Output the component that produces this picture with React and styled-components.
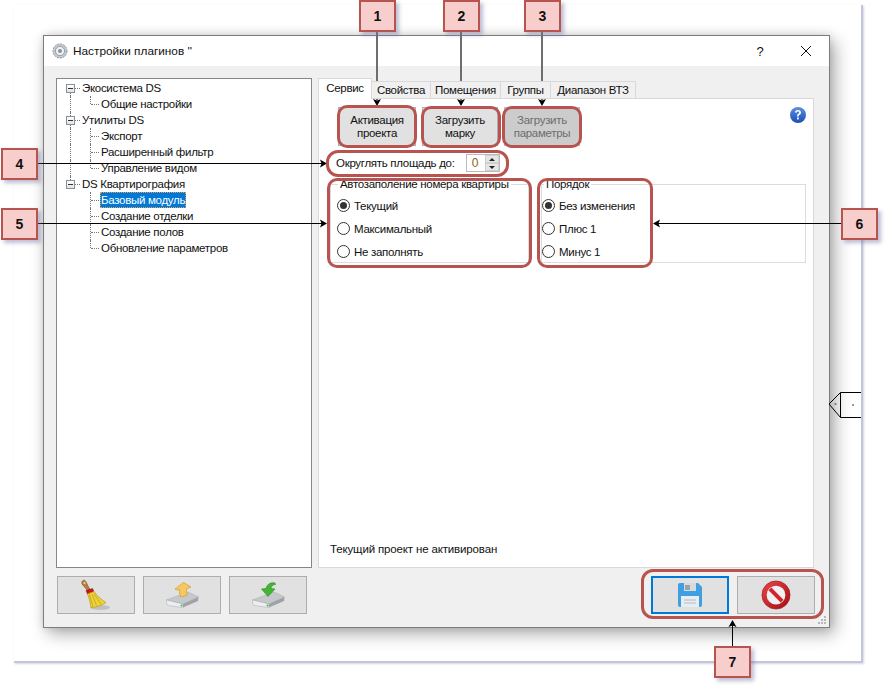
import React from 'react';
import styled, { createGlobalStyle } from 'styled-components';

const Global = createGlobalStyle`
  html, body { margin: 0; padding: 0; background: #fff; }
  body { font-family: "Liberation Sans", Roboto, sans-serif; font-size: 11.5px; letter-spacing: -0.3px; color: #111; }
`;
const Page = styled.div`position: relative; width: 889px; height: 690px; overflow: hidden; background: #fff;`;
const Sheet = styled.div`
  box-sizing: border-box; width: 849px; height: 658px; margin-left: 14px; margin-top: 5px;
  padding: 30px 0 0 29px; border-right: 2px solid #c3c5da; border-bottom: 2px solid #c3c5da;
  box-shadow: 1px 1px 2px rgba(180,182,210,.6);
`;
const Dialog = styled.div`
  box-sizing: border-box; width: 787px; height: 593px; background: #f0f0f0;
  border: 1px solid #7c7c7c; box-shadow: 5px 6px 16px rgba(0,0,0,.32), 0 0 8px rgba(0,0,0,.12);
  position: relative;
`;
const TitleBar = styled.div`
  height: 30px; background: #fff; display: flex; align-items: center; padding: 0 0 0 8px;
`;
const TitleText = styled.span`flex: 1; margin-left: 5px; font-size: 11.8px; letter-spacing: 0;`;
const TitleBtn = styled.span`width: 46px; display: flex; justify-content: center; align-items: center; font-size: 13px;`;
const Body = styled.div`
  display: grid; grid-template-columns: 256px 496px; column-gap: 6px; grid-template-rows: 490px 38px; row-gap: 8px;
  padding: 12px 0 0 12px;
`;
const Tree = styled.div`box-sizing: border-box; background: #fff; border: 1px solid #828790; padding-top: 1px;`;
const Row = styled.div`
  position: relative; height: 16px; line-height: 16px; padding-left: ${p => p.$child ? 43 : 24}px; white-space: nowrap;
  &::before {
    content: ""; display: ${p => p.$trunk ? 'block' : 'none'}; position: absolute; left: 13px; top: ${p => p.$first ? 8 : 0}px;
    height: ${p => p.$last ? 8 : 16}px; border-left: 1px dotted #777;
  }
`;
const Branch = styled.i`
  position: absolute; left: 33px; top: 0; width: 9px; height: ${p => p.$end ? 8 : 16}px; box-sizing: border-box; border-left: 1px dotted #777;
  &::after { content: ""; position: absolute; left: 0; top: 8px; width: 8px; border-top: 1px dotted #777; }
`;
const Expander = styled.i`
  position: absolute; left: 9px; top: 4px; width: 9px; height: 9px; box-sizing: border-box; border: 1px solid #8a8f98;
  background: linear-gradient(#fff, #dfe3ea); z-index: 1;
  &::after { content: ""; position: absolute; left: 1px; top: 3px; width: 5px; height: 1px; background: #333; }
  &::before { content: ""; position: absolute; left: 8px; top: 3px; width: 5px; border-top: 1px dotted #777; }
`;
const RowLabel = styled.span`
  display: inline-block; padding: 0 1px; height: 16px; box-sizing: border-box;
  ${p => p.$selected && 'background:#0078d7;color:#fff;outline:1px dotted #f0a040;outline-offset:-1px;'}
`;
const Right = styled.div`display: flex; flex-direction: column; min-height: 0;`;
const TabStrip = styled.div`display: flex; height: 21px; align-items: flex-end; position: relative; z-index: 1; margin-bottom: -1px;`;
const Tab = styled.div`
  box-sizing: border-box; width: ${p => p.$w}px; height: ${p => p.$active ? 21 : 18}px; line-height: ${p => p.$active ? 18 : 17}px;
  text-align: center; white-space: nowrap; border: 1px solid #d9d9d9; margin-left: -1px;
  border-bottom: ${p => p.$active ? 'none' : '1px solid #d9d9d9'};
  background: ${p => p.$active ? '#fff' : '#f0f0f0'};
  &:first-child { margin-left: 0; }
`;
const Panel = styled.div`
  flex: 1; box-sizing: border-box; background: #fff; border: 1px solid #d9d9d9; display: flex; flex-direction: column;
  padding: 8px 7px 10px 11px;
`;
const ActionRow = styled.div`display: flex; gap: 6px; padding-left: 8px;`;
const ActionBtn = styled.div`
  box-sizing: border-box; width: ${p => p.$w}px; height: 39px; display: flex; align-items: center; justify-content: center; text-align: center;
  line-height: 13px; background: ${p => p.$disabled ? '#cccccc' : '#e1e1e1'}; border: 1px solid ${p => p.$disabled ? '#bfbfbf' : '#adadad'};
  color: ${p => p.$disabled ? '#6d6d6d' : '#111'};
`;
const HelpIcon = styled.span`margin: -1px -1px 0 auto; display: block; width: 18px; height: 18px;`;
const SpinRow = styled.div`display: flex; align-items: center; height: 18px; margin-top: 8px; padding-left: 6px;`;
const SpinLabel = styled.span`width: 130px; white-space: nowrap;`;
const SpinBox = styled.div`
  box-sizing: border-box; width: 34px; height: 18px; border: 1px solid #bbb; display: flex; align-items: center; color: #8a6416;
`;
const SpinValue = styled.span`flex: 1; text-align: center; font-size: 12px; padding-right: 2px;`;
const SpinArrows = styled.div`display: flex; flex-direction: column; width: 14px; height: 16px;`;
const SpinArrow = styled.div`
  flex: 1; background: #e6e6e6; display: flex; align-items: center; justify-content: center; border: 1px solid #cfcfcf;
  &::after { content: ""; border-left: 3px solid transparent; border-right: 3px solid transparent;
    ${p => p.$up ? 'border-bottom: 3px solid #222;' : 'border-top: 3px solid #222;'} }
`;
const Groups = styled.div`display: flex; gap: 12px; margin-top: 5px;`;
const Group = styled.fieldset`
  box-sizing: border-box; margin: 0; height: 86px; width: ${p => p.$w}px; border: 1px solid #dcdcdc; padding: 2px 0 0 ${p => p.$pad}px; min-width: 0;
`;
const Legend = styled.legend`padding: 0 2px; margin-left: ${p => p.$off}px; line-height: 15px; white-space: nowrap;`;
const RadioRow = styled.label`display: flex; align-items: center; gap: 4px; height: 23px;`;
const Radio = styled.span`
  box-sizing: border-box; width: 13px; height: 13px; border-radius: 50%; border: 1px solid #333; display: flex; align-items: center; justify-content: center; background: #fff;
  &::after { content: ""; width: 7px; height: 7px; border-radius: 50%; background: ${p => p.$on ? '#333' : 'transparent'}; }
`;
const Status = styled.div`margin-top: auto; line-height: 16px; letter-spacing: -0.15px;`;
const Footer = styled.div`grid-column: 1 / 3; display: flex; justify-content: space-between; width: 758px; margin-left: 1px;`;
const BtnGroup = styled.div`display: flex; gap: 8px;`;
const ToolBtn = styled.div`
  box-sizing: border-box; width: 78px; height: 38px; background: #e1e1e1; display: flex; align-items: center; justify-content: center;
  border: ${p => p.$focus ? '2px solid #0078d7' : '1px solid #adadad'};
`;
const Grip = styled.svg`position: absolute; right: 2px; bottom: 2px;`;
const Highlight = styled.div`
  position: absolute; box-sizing: border-box; border: 3px solid #b85450; border-radius: ${p => p.$r}px; pointer-events: none;
  left: ${p => p.$x}px; top: ${p => p.$y}px; width: ${p => p.$w}px; height: ${p => p.$h}px;
`;
const Callout = styled.div`
  position: absolute; box-sizing: border-box; left: ${p => p.$x}px; top: ${p => p.$y}px; width: 37px; height: 32px;
  background: #f8cecc; border: 2px solid #b85450; box-shadow: 3px 3px 4px rgba(110,110,160,.45);
  display: flex; align-items: center; justify-content: center; font: bold 14px "Liberation Sans", sans-serif; letter-spacing: 0; color: #111;
`;
const Overlay = styled.svg`position: absolute; left: 0; top: 0; pointer-events: none;`;

const Gear = () => (
  <svg width="16" height="16" viewBox="0 0 16 16">
    <circle cx="8" cy="8" r="7" fill="#c4c8cf" stroke="#8d929b" strokeDasharray="2 1" />
    <circle cx="8" cy="8" r="4.6" fill="#eef0f3" stroke="#9aa0a8" />
    <circle cx="8" cy="8" r="2" fill="#8b9099" />
  </svg>
);
const Help = () => (
  <svg width="18" height="18" viewBox="0 0 18 18">
    <defs><linearGradient id="hb" x1="0" y1="0" x2="0" y2="1"><stop offset="0" stopColor="#5d90de" /><stop offset="1" stopColor="#1a4fb5" /></linearGradient></defs>
    <circle cx="9" cy="9" r="8" fill="url(#hb)" />
    <path d="M6 6.6C6 4.8 7.3 4 9 4s3 .9 3 2.5c0 1.2-.7 1.8-1.5 2.3-.6.4-.9.8-.9 1.6H8c0-1.300.4-2 1.200-2.600.6-.4 1-.7 1-1.200 0-.6-.5-1-1.200-1-.8 0-1.200.4-1.300 1.100z" fill="#fff" />
    <rect x="8" y="11.500" width="1.800" height="1.900" fill="#fff" />
  </svg>
);
const Broom = () => (
  <svg width="30" height="32" viewBox="0 0 30 32">
    <ellipse cx="19" cy="28.500" rx="10" ry="2.500" fill="#999" opacity=".45" />
    <path d="M1 5 C0 1 4 0 5 3 L9 11 L7 12z" fill="#b9813a" stroke="#7f5320" strokeWidth=".7" />
    <circle cx="3.500" cy="4" r="1" fill="#f2dcb0" />
    <path d="M5 11.500 L11.500 9.500 L13 12.500 L6.500 15z" fill="#c8141c" stroke="#8d0d12" strokeWidth=".5" />
    <path d="M6.500 15 L13 12.500 C16 17 21 21 25 23.500 C21 26.500 15 28.500 10 28.500 C9.500 24 8 19 6.500 15z" fill="#eed23a" stroke="#b79d16" strokeWidth=".7" />
    <path d="M8.500 15.500 L12 27.500 M11 15 L15.500 26.500 M13 14.500 L20 25" stroke="#b79d16" strokeWidth=".7" fill="none" />
  </svg>
);
const Drive = ({ children }) => (
  <svg width="33" height="26" viewBox="0 0 33 26">
    <path d="M.5 18 L22 10 L32.500 15 L17 22z" fill="#c5c8cc" stroke="#a4a8ad" strokeWidth=".5" />
    <path d="M.5 18 L17 22 L17 25.500 L2 23.500 C.5 23 .2 20 .5 18z" fill="#eceef0" stroke="#a4a8ad" strokeWidth=".5" />
    <path d="M17 22 L32.500 15 L32 19 L17 25.500z" fill="#9fa3a8" />
    <circle cx="15.500" cy="23.500" r="1" fill="#37c24a" />
    {children}
  </svg>
);
const Floppy = () => (
  <svg width="24" height="24" viewBox="0 0 24 24">
    <path d="M2 0 H20 L24 4 V22 a2 2 0 0 1-2 2 H2 a2 2 0 0 1-2-2 V2 a2 2 0 0 1 2-2z" fill="#3f9fe0" />
    <rect x="6" y="0" width="12" height="8" fill="#d5dbde" />
    <rect x="7" y="2" width="5" height="5" fill="#9aa3a8" />
    <rect x="3" y="13" width="18" height="11" fill="#e7edf0" />
    <path d="M6 17 H18 M6 20 H18" stroke="#b3bdc3" strokeWidth="1" />
  </svg>
);
const NoSign = () => (
  <svg width="30" height="30" viewBox="0 0 32 32">
    <defs><linearGradient id="ns" x1="0" y1="0" x2="1" y2="1"><stop offset="0" stopColor="#e8454c" /><stop offset="1" stopColor="#a50d12" /></linearGradient></defs>
    <circle cx="16" cy="16" r="15" fill="url(#ns)" stroke="#9c1c1e" strokeWidth=".7" />
    <circle cx="16" cy="16" r="10" fill="#eef0f1" />
    <path d="M8 11 L11 8 L24 21 L21 24z" fill="#d4222a" />
  </svg>
);

const head = (x, y, dir) => {
  const r = { down: 0, up: 180, left: 90, right: -90 }[dir];
  return <path d="M0 0 L-4 -7 L0 -5.500 L4 -7z" fill="#000" transform={`translate(${x} ${y}) rotate(${r})`} />;
};

const tree = [
  { t: 'Экосистема DS', trunk: true, first: true },
  { t: 'Общие настройки', child: true, trunk: true, end: true },
  { t: 'Утилиты DS', trunk: true },
  { t: 'Экспорт', child: true, trunk: true },
  { t: 'Расширенный фильтр', child: true, trunk: true },
  { t: 'Управление видом', child: true, trunk: true, end: true },
  { t: 'DS Квартирография', trunk: true, last: true },
  { t: 'Базовый модуль', child: true, selected: true },
  { t: 'Создание отделки', child: true },
  { t: 'Создание полов', child: true },
  { t: 'Обновление параметров', child: true, end: true },
];
const tabs = [['Сервис', 54, true], ['Свойства', 60], ['Помещения', 71], ['Группы', 51], ['Диапазон ВТЗ', 86]];
const highlights = [
  [337, 105, 80, 43, 10], [421, 106, 80, 42, 10], [502, 106, 80, 42, 10], [326, 150, 183, 27, 12],
  [327, 178, 205, 90, 10], [537, 178, 116, 90, 10], [641, 569, 183, 50, 12],
];
const callouts = [['1', 359, 0], ['2', 443, 0], ['3', 524, 0], ['4', 1, 148], ['5', 1, 208], ['6', 841, 208], ['7', 714, 646]];

export default function App() {
  return (
    <Page>
      <Global />
      <Sheet>
        <Dialog>
          <TitleBar>
            <Gear />
            <TitleText>Настройки плагинов ''</TitleText>
            <TitleBtn>?</TitleBtn>
            <TitleBtn>
              <svg width="12" height="12" viewBox="0 0 12 12"><path d="M1 1 L11 11 M11 1 L1 11" stroke="#111" strokeWidth="1" /></svg>
            </TitleBtn>
          </TitleBar>
          <Body>
            <Tree>
              {tree.map(n => (
                <Row key={n.t} $child={n.child} $trunk={n.trunk} $first={n.first} $last={n.last}>
                  {n.child ? <Branch $end={n.end} /> : <Expander />}
                  <RowLabel $selected={n.selected}>{n.t}</RowLabel>
                </Row>
              ))}
            </Tree>
            <Right>
              <TabStrip>
                {tabs.map(([t, w, a]) => <Tab key={t} $w={w} $active={a}>{t}</Tab>)}
              </TabStrip>
              <Panel>
                <ActionRow>
                  <ActionBtn $w={78}>Активация<br />проекта</ActionBtn>
                  <ActionBtn $w={76}>Загрузить<br />марку</ActionBtn>
                  <ActionBtn $w={76} $disabled>Загрузить<br />параметры</ActionBtn>
                  <HelpIcon><Help /></HelpIcon>
                </ActionRow>
                <SpinRow>
                  <SpinLabel>Округлять площадь до:</SpinLabel>
                  <SpinBox>
                    <SpinValue>0</SpinValue>
                    <SpinArrows><SpinArrow $up /><SpinArrow /></SpinArrows>
                  </SpinBox>
                </SpinRow>
                <Groups>
                  <Group $w={199} $pad={6}>
                    <Legend $off={1}>Автозаполение номера квартиры</Legend>
                    <RadioRow><Radio $on />Текущий</RadioRow>
                    <RadioRow><Radio />Максимальный</RadioRow>
                    <RadioRow><Radio />Не заполнять</RadioRow>
                  </Group>
                  <Group $w={265} $pad={0}>
                    <Legend $off={2}>Порядок</Legend>
                    <RadioRow><Radio $on />Без изменения</RadioRow>
                    <RadioRow><Radio />Плюс 1</RadioRow>
                    <RadioRow><Radio />Минус 1</RadioRow>
                  </Group>
                </Groups>
                <Status>Текущий проект не активирован</Status>
              </Panel>
            </Right>
            <Footer>
              <BtnGroup>
                <ToolBtn><Broom /></ToolBtn>
                <ToolBtn>
                  <Drive>
                    <path d="M11 8 L9 7 L17.500 0.500 L25 5 L21 6.500 C20 8.500 20.500 11 21.500 13 L15 15 C13.500 12 13 10 14 7.500z" fill="#f6c960" stroke="#d49a2c" strokeWidth=".7" />
                  </Drive>
                </ToolBtn>
                <ToolBtn>
                  <Drive>
                    <path d="M23 1 C19 0 15 2 14 6.500 L9.500 7 L16 14.500 L23 7 L19 6.500 C19 4.500 21 2.500 23.500 2.500z" fill="#42b536" stroke="#2a8f22" strokeWidth=".6" />
                  </Drive>
                </ToolBtn>
              </BtnGroup>
              <BtnGroup>
                <ToolBtn $focus><Floppy /></ToolBtn>
                <ToolBtn><NoSign /></ToolBtn>
              </BtnGroup>
            </Footer>
          </Body>
          <Grip width="9" height="9" viewBox="0 0 9 9" fill="#b8b8b8">
            <rect x="6" y="0" width="2" height="2" /><rect x="3" y="3" width="2" height="2" /><rect x="6" y="3" width="2" height="2" />
            <rect x="0" y="6" width="2" height="2" /><rect x="3" y="6" width="2" height="2" /><rect x="6" y="6" width="2" height="2" />
          </Grip>
        </Dialog>
      </Sheet>

      <Overlay width="889" height="690" viewBox="0 0 889 690">
        <path d="M377 31 V100 M461 31 V100 M542 31 V100" stroke="#6e6e6e" strokeWidth="2" fill="none" />
        <path d="M38 163.500 H322 M38 223.500 H322 M841 223.500 H658 M732.500 647 V624" stroke="#000" strokeWidth="1" fill="none" />
        {head(377, 106, 'down')}{head(461, 106, 'down')}{head(542, 106, 'down')}
        {head(327, 163.500, 'right')}{head(327, 223.500, 'right')}{head(653, 223.500, 'left')}{head(732.500, 620, 'up')}
        <path d="M861 392.500 H840.500 L829 404 L840.500 417.500 H861 M840.500 392.500 V417.500" fill="none" stroke="#000" strokeWidth="1" />
        <path d="M834.500 404 H836.500 M852 405 H854" stroke="#333" strokeWidth="1" />
      </Overlay>
      {highlights.map(([x, y, w, h, r]) => <Highlight key={`${x}-${y}`} $x={x} $y={y} $w={w} $h={h} $r={r} />)}
      {callouts.map(([t, x, y]) => <Callout key={t} $x={x} $y={y}>{t}</Callout>)}
    </Page>
  );
}
